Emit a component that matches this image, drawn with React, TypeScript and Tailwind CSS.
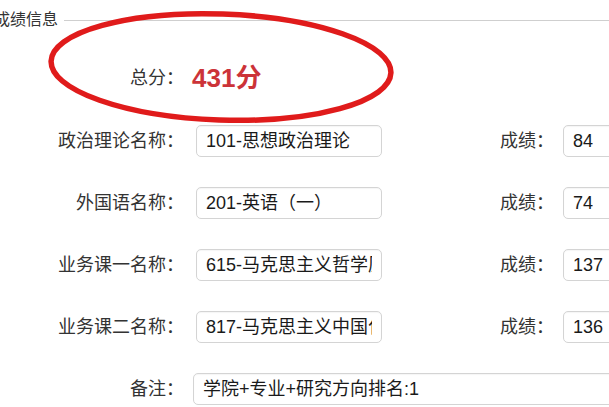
import React from "react";

interface Course {
  label: string;
  name: string;
  score: string;
}

const courses: Course[] = [
  { label: "政治理论名称：", name: "101-思想政治理论", score: "84" },
  { label: "外国语名称：", name: "201-英语（一）", score: "74" },
  { label: "业务课一名称：", name: "615-马克思主义哲学原理", score: "137" },
  { label: "业务课二名称：", name: "817-马克思主义中国化研究", score: "136" },
];

function Field({ value, className }: { value: string; className: string }) {
  return (
    <div
      className={`h-[32px] shrink-0 rounded-[5px] border border-[#d4d4d4] bg-white pl-[9px] pr-[9px] flex items-center shadow-[inset_0_1px_1px_rgba(0,0,0,0.04)] ${className}`}
    >
      <div className="overflow-hidden whitespace-nowrap text-[18px] text-[#1a1a1a]">
        {value}
      </div>
    </div>
  );
}

export default function App() {
  return (
    <div
      className="relative w-[609px] h-[407px] overflow-hidden bg-white text-[#333]"
      style={{ fontFamily: '"Liberation Sans", "Noto Sans CJK SC", sans-serif' }}
    >
      {/* section header */}
      <div className="flex items-center h-[20px] mt-[10px] -ml-[6px]">
        <span className="text-[16px] leading-none">成绩信息</span>
        <div className="flex-1 h-px bg-[#cfcfcf] ml-[6px]" />
      </div>

      {/* total */}
      <div className="flex items-center h-[32px] mt-[32px]">
        <div className="w-[184px] text-right text-[18px]">总分：</div>
        <div className="ml-[8px] text-[26px] font-bold text-[#cc3338] leading-none">
          431分
        </div>
      </div>

      {/* courses */}
      <div className="flex flex-col gap-[30px] mt-[31px]">
        {courses.map((c) => (
          <div key={c.label} className="flex items-center h-[32px]">
            <div className="w-[184px] shrink-0 text-right text-[18px] whitespace-nowrap">
              {c.label}
            </div>
            <Field value={c.name} className="ml-[12px] w-[186px]" />
            <div className="w-[172px] shrink-0 text-right text-[18px]">成绩：</div>
            <Field value={c.score} className="ml-[9px] w-[90px]" />
          </div>
        ))}
        <div className="flex items-center h-[32px]">
          <div className="w-[184px] shrink-0 text-right text-[18px]">备注：</div>
          <Field value="学院+专业+研究方向排名:1" className="ml-[9px] w-[440px]" />
        </div>
      </div>

      {/* red hand-drawn mark */}
      <svg
        className="absolute left-0 top-0 pointer-events-none"
        width="609"
        height="407"
        viewBox="0 0 609 407"
      >
        <ellipse
          cx="221"
          cy="67"
          rx="170"
          ry="53"
          transform="rotate(2 221 67)"
          fill="none"
          stroke="#e01b1b"
          strokeWidth="5.5"
        />
      </svg>
    </div>
  );
}
